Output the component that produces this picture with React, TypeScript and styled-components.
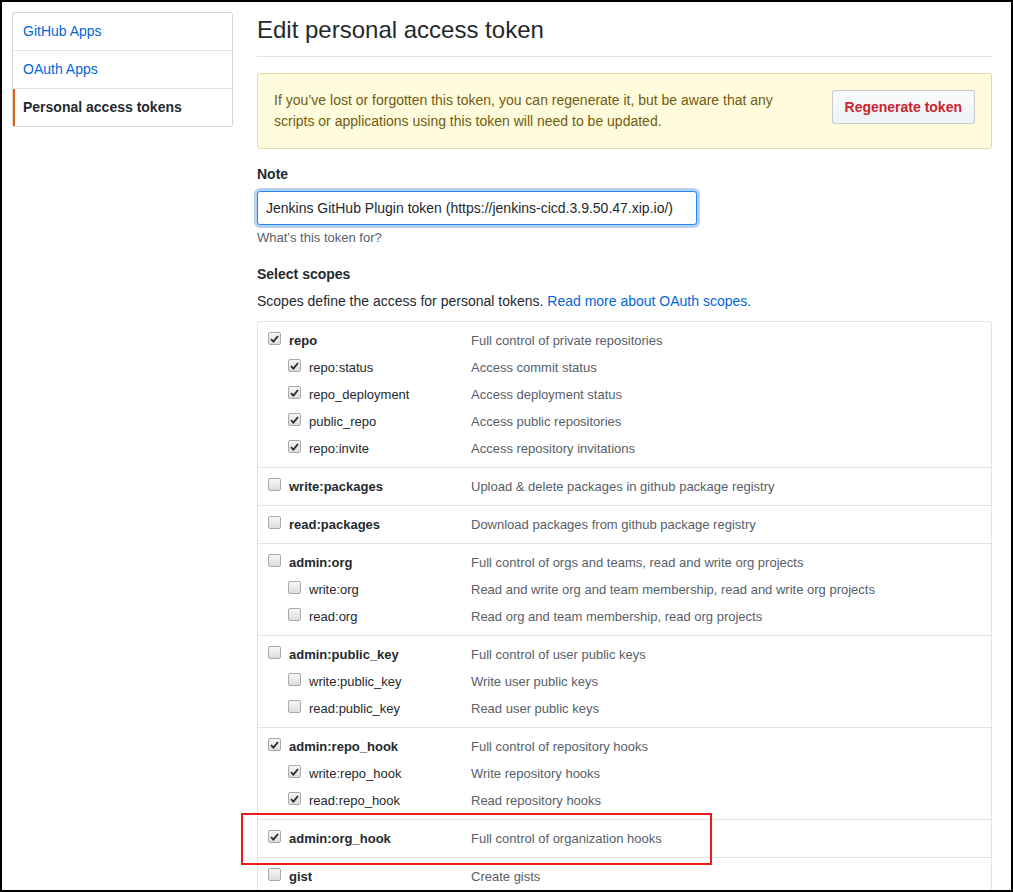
import React from "react";
import styled, { createGlobalStyle } from "styled-components";

const GlobalStyle = createGlobalStyle`
  html, body { margin: 0; padding: 0; background: #fff; }
  body {
    font-family: "Liberation Sans", Arial, Helvetica, sans-serif;
    font-size: 14px;
    line-height: 1.5;
    color: #24292e;
  }
  * { box-sizing: border-box; }
`;

const Frame = styled.div`
  width: 1013px;
  height: 892px;
  border: 2px solid #000;
  overflow: hidden;
  padding: 10px 19px 0 10px;
  display: flex;
  align-items: flex-start;
  gap: 24px;
`;

const Sidebar = styled.nav`
  width: 221px;
  flex: none;
  border: 1px solid #d1d5da;
  border-radius: 3px;
  display: flex;
  flex-direction: column;
`;

const MenuItem = styled.a<{ $selected?: boolean }>`
  display: block;
  height: 38px;
  padding: 8px 10px 8px 8px;
  line-height: 21px;
  font-size: 14px;
  text-decoration: none;
  color: ${(p) => (p.$selected ? "#24292e" : "#0366d6")};
  font-weight: ${(p) => (p.$selected ? 700 : 400)};
  border-bottom: 1px solid #e1e4e8;
  border-left: 2px solid ${(p) => (p.$selected ? "#e36209" : "transparent")};
  &:last-child { border-bottom: none; height: 37px; }
`;

const Main = styled.main`
  flex: 1;
  min-width: 0;
`;

const Title = styled.h1`
  margin: 0;
  font-size: 24px;
  font-weight: 400;
  line-height: 36px;
  padding-bottom: 8px;
  border-bottom: 1px solid #e1e4e8;
  color: #24292e;
`;

const Flash = styled.div`
  margin-top: 16px;
  padding: 16px;
  background: #fffbdd;
  border: 1px solid #e2d9a8;
  border-radius: 3px;
  display: flex;
  align-items: flex-start;
  color: #735c0f;
  line-height: 21px;
`;

const FlashText = styled.div`
  max-width: 520px;
`;

const Button = styled.button`
  margin-left: auto;
  font-family: inherit;
  font-size: 14px;
  font-weight: 700;
  line-height: 20px;
  padding: 6px 12px;
  color: #cb2431;
  background: linear-gradient(-180deg, #fafbfc 0%, #eff3f6 90%);
  border: 1px solid rgba(27, 31, 35, 0.2);
  border-radius: 3px;
  cursor: pointer;
  white-space: nowrap;
`;

const FormGroup = styled.div`
  margin-top: 15px;
`;

const Label = styled.label`
  display: block;
  font-weight: 700;
  line-height: 21px;
  margin-bottom: 6px;
`;

const Input = styled.input`
  width: 440px;
  height: 34px;
  padding: 6px 8px;
  font-family: inherit;
  font-size: 14px;
  color: #24292e;
  border: 1px solid #2188ff;
  border-radius: 3px;
  outline: none;
  box-shadow: 0 0 0 3px rgba(3, 102, 214, 0.3);
`;

const Note = styled.p`
  margin: 4px 0 0;
  font-size: 13px;
  line-height: 18px;
  color: #586069;
`;

const SectionTitle = styled.h3`
  margin: 17px 0 0;
  font-size: 14px;
  font-weight: 700;
  line-height: 21px;
`;

const Desc = styled.p`
  margin: 6px 0 9px;
  line-height: 21px;
  a { color: #0366d6; text-decoration: none; }
`;

const ScopeTable = styled.div`
  border: 1px solid #e1e4e8;
  border-radius: 3px;
  font-size: 13px;
`;

const Group = styled.div`
  position: relative;
  padding: 5px 0;
  border-bottom: 1px solid #e1e4e8;
  &:last-child { border-bottom: none; }
`;

const Row = styled.div`
  display: grid;
  grid-template-columns: 203px 1fr;
  height: 27px;
  align-items: center;
  padding-left: 10px;
`;

const NameCell = styled.label<{ $child?: boolean }>`
  display: flex;
  align-items: center;
  gap: 8px;
  padding-left: ${(p) => (p.$child ? "20px" : "0")};
  font-weight: ${(p) => (p.$child ? 400 : 700)};
  color: #24292e;
  white-space: nowrap;
`;

const ScopeDesc = styled.span`
  color: #586069;
  white-space: nowrap;
`;

const Box = styled.span`
  width: 13px;
  height: 13px;
  flex: none;
  position: relative;
  top: -2px;
  border: 1px solid #a9a9a9;
  border-radius: 2px;
  background: linear-gradient(#f7f7f7, #dddddd);
  display: flex;
  align-items: center;
  justify-content: center;
`;

const Highlight = styled.div`
  position: absolute;
  left: -17px;
  top: -7px;
  width: 471px;
  height: 52px;
  border: 2px solid #f01919;
  pointer-events: none;
`;

const Checkbox = ({ checked }: { checked?: boolean }) => (
  <Box>
    {checked && (
      <svg width="9" height="8" viewBox="0 0 9 8">
        <path d="M1 4.2 L3.4 6.6 L8 1" fill="none" stroke="#2b2b2b" strokeWidth="1.8" />
      </svg>
    )}
  </Box>
);

type Scope = { name: string; desc: string; checked: boolean; children?: Scope[]; highlight?: boolean };

const scopes: Scope[] = [
  {
    name: "repo", desc: "Full control of private repositories", checked: true,
    children: [
      { name: "repo:status", desc: "Access commit status", checked: true },
      { name: "repo_deployment", desc: "Access deployment status", checked: true },
      { name: "public_repo", desc: "Access public repositories", checked: true },
      { name: "repo:invite", desc: "Access repository invitations", checked: true },
    ],
  },
  { name: "write:packages", desc: "Upload & delete packages in github package registry", checked: false },
  { name: "read:packages", desc: "Download packages from github package registry", checked: false },
  {
    name: "admin:org", desc: "Full control of orgs and teams, read and write org projects", checked: false,
    children: [
      { name: "write:org", desc: "Read and write org and team membership, read and write org projects", checked: false },
      { name: "read:org", desc: "Read org and team membership, read org projects", checked: false },
    ],
  },
  {
    name: "admin:public_key", desc: "Full control of user public keys", checked: false,
    children: [
      { name: "write:public_key", desc: "Write user public keys", checked: false },
      { name: "read:public_key", desc: "Read user public keys", checked: false },
    ],
  },
  {
    name: "admin:repo_hook", desc: "Full control of repository hooks", checked: true,
    children: [
      { name: "write:repo_hook", desc: "Write repository hooks", checked: true },
      { name: "read:repo_hook", desc: "Read repository hooks", checked: true },
    ],
  },
  { name: "admin:org_hook", desc: "Full control of organization hooks", checked: true, highlight: true },
  { name: "gist", desc: "Create gists", checked: false },
];

const ScopeRow = ({ s, child }: { s: Scope; child?: boolean }) => (
  <Row>
    <NameCell $child={child}>
      <Checkbox checked={s.checked} />
      {s.name}
    </NameCell>
    <ScopeDesc>{s.desc}</ScopeDesc>
  </Row>
);

export default function App() {
  return (
    <>
      <GlobalStyle />
      <Frame>
        <Sidebar>
          <MenuItem href="#">GitHub Apps</MenuItem>
          <MenuItem href="#">OAuth Apps</MenuItem>
          <MenuItem href="#" $selected>Personal access tokens</MenuItem>
        </Sidebar>
        <Main>
          <Title>Edit personal access token</Title>
          <Flash>
            <FlashText>
              If you’ve lost or forgotten this token, you can regenerate it, but be aware that any scripts or
              applications using this token will need to be updated.
            </FlashText>
            <Button>Regenerate token</Button>
          </Flash>
          <FormGroup>
            <Label>Note</Label>
            <Input defaultValue="Jenkins GitHub Plugin token (https://jenkins-cicd.3.9.50.47.xip.io/)" />
            <Note>What’s this token for?</Note>
          </FormGroup>
          <SectionTitle>Select scopes</SectionTitle>
          <Desc>
            Scopes define the access for personal tokens. <a href="#">Read more about OAuth scopes.</a>
          </Desc>
          <ScopeTable>
            {scopes.map((s) => (
              <Group key={s.name}>
                {s.highlight && <Highlight />}
                <ScopeRow s={s} />
                {s.children?.map((c) => <ScopeRow key={c.name} s={c} child />)}
              </Group>
            ))}
          </ScopeTable>
        </Main>
      </Frame>
    </>
  );
}
